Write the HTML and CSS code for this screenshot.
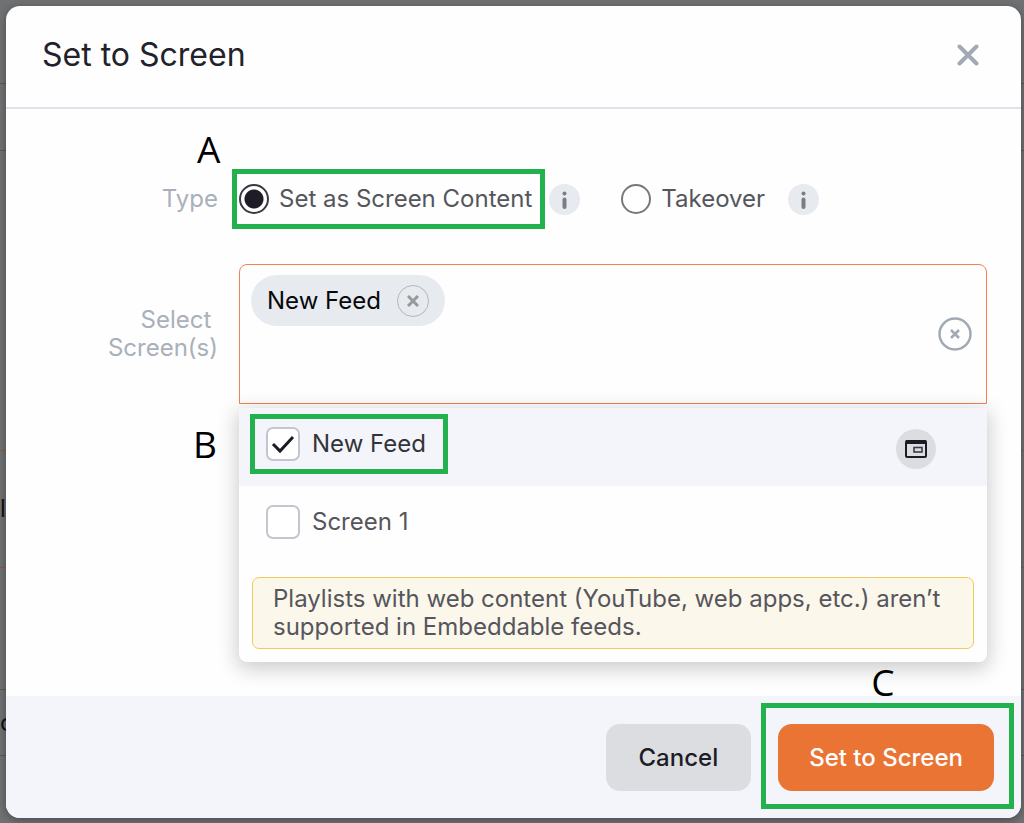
FILE: index.html
```
<!DOCTYPE html>
<html lang="en">
<head>
    <meta charset="UTF-8">
    <meta name="viewport" content="width=device-width, initial-scale=1.0">
    <title>Set to Screen</title>
    <link rel="stylesheet" href="styles.css">
</head>
<body>
    <!-- dimmed list behind the dialog -->
    <div class="backdrop" aria-hidden="true">
        <div class="line line-1"></div>
        <div class="line line-2"></div>
        <div class="line line-3 accent"></div>
        <div class="line line-4 accent">l</div>
        <div class="line line-5"></div>
        <div class="line line-6">o</div>
    </div>

    <div class="modal" role="dialog" aria-labelledby="modal-title">
        <header class="modal-header">
            <h1 id="modal-title">Set to Screen</h1>
            <button class="close" type="button" aria-label="Close">
                <svg width="22" height="22" viewBox="0 0 22 22"><path d="M2.5 2.5L19.5 19.5M19.5 2.5L2.5 19.5"/></svg>
            </button>
        </header>

        <form id="screen-form" class="modal-body">
            <div class="row type-row" role="radiogroup" aria-labelledby="type-label">
                <span id="type-label" class="row-label">Type</span>
                <div class="choices">
                    <div class="choice marked">
                        <input type="radio" id="type-content" name="type" checked>
                        <label for="type-content">Set as Screen Content</label>
                        <span class="mark mark-type"></span>
                        <span class="letter letter-a">A</span>
                    </div>
                    <button class="info" type="button" aria-label="About screen content">
                        <svg width="31" height="31" viewBox="0 0 31 31"><circle cx="15.5" cy="9.5" r="2"/><rect x="13.5" y="13.5" width="4" height="11.5" rx="2"/></svg>
                    </button>
                    <div class="choice takeover">
                        <input type="radio" id="type-takeover" name="type">
                        <label for="type-takeover">Takeover</label>
                    </div>
                    <button class="info" type="button" aria-label="About takeover">
                        <svg width="31" height="31" viewBox="0 0 31 31"><circle cx="15.5" cy="9.5" r="2"/><rect x="13.5" y="13.5" width="4" height="11.5" rx="2"/></svg>
                    </button>
                </div>
            </div>

            <div class="row">
                <span id="screens-label" class="row-label screens-label">Select&nbsp;<br>Screen(s)</span>
                <div class="picker" role="group" aria-labelledby="screens-label">
                    <div class="picker-field">
                        <span class="chip">
                            New Feed
                            <button class="chip-remove" type="button" aria-label="Remove New Feed">
                                <svg width="12" height="12" viewBox="0 0 12 12"><path d="M1 1L11 11M11 1L1 11"/></svg>
                            </button>
                        </span>
                        <button class="clear" type="button" aria-label="Clear all">
                            <svg width="34" height="34" viewBox="0 0 34 34"><circle cx="17" cy="17" r="15.5"/><path d="M13 13L21 21M21 13L13 21"/></svg>
                        </button>
                    </div>

                    <div class="menu">
                        <div class="option selected">
                            <div class="option-main">
                                <input type="checkbox" id="screen-feed" checked>
                                <label for="screen-feed">New Feed</label>
                                <span class="mark mark-option"></span>
                                <span class="letter letter-b">B</span>
                            </div>
                            <span class="badge">
                                <svg width="22" height="18" viewBox="0 0 22 18">
                                    <rect x="1" y="1" width="20" height="16" rx="1" fill="none" stroke="#1c1b25" stroke-width="2"/>
                                    <rect x="1" y="0" width="20" height="4" fill="#1c1b25"/>
                                    <rect x="9" y="7.5" width="8" height="4.5" fill="none" stroke="#3c3b43" stroke-width="1.6"/>
                                </svg>
                            </span>
                        </div>
                        <div class="option">
                            <div class="option-main">
                                <input type="checkbox" id="screen-1">
                                <label for="screen-1">Screen 1</label>
                            </div>
                        </div>
                        <p class="note">Playlists with web content (YouTube, web apps, etc.) aren’t supported in Embeddable feeds.</p>
                    </div>
                </div>
            </div>
        </form>

        <footer class="modal-footer">
            <button class="btn" type="button">Cancel</button>
            <div class="marked">
                <button class="btn btn-primary" type="submit" form="screen-form">Set to Screen</button>
                <span class="mark mark-submit"></span>
                <span class="letter letter-c">C</span>
            </div>
        </footer>
    </div>
</body>
</html>
```
FILE: styles.css
```
* {
    margin: 0;
    padding: 0;
    box-sizing: border-box;
}

body {
    min-height: 100vh;
    padding: 6px 3px 5px 6px;
    display: flex;
    background: #707173;
    font-family: Inter, "Liberation Sans", sans-serif;
    font-size: 24px;
    line-height: 28px;
    color: #55565c;
}

button {
    border: none;
    background: none;
    font: inherit;
    cursor: pointer;
}

svg {
    display: block;
}

/* Page behind */
.backdrop {
    position: absolute;
    inset: 0;
    overflow: hidden;
    color: #111114;
}

.line {
    display: flex;
    align-items: center;
    border-bottom: 1px solid #5a5b5d;
}

.line-1 { height: 84px; }
.line-2 { height: 67px; }
.line-3 { height: 300px; }
.line-4 { height: 117px; }
.line-5 { height: 122px; }
.line-6 { height: 66px; }

.line.accent {
    border-color: #8d5a40;
}

/* Dialog */
.modal {
    position: relative;
    flex: 1;
    display: flex;
    flex-direction: column;
    background: #fefefe;
    border-radius: 14px;
    box-shadow: 0 2px 8px rgba(0, 0, 0, 0.35);
}

.modal-header {
    display: flex;
    align-items: center;
    justify-content: space-between;
    height: 103px;
    padding: 0 42px 4px 36px;
    border-bottom: 2px solid #e0e2e9;
}

h1 {
    font-size: 32px;
    font-weight: 400;
    line-height: 40px;
    color: #22222b;
}

.close path {
    fill: none;
    stroke: #a1aab4;
    stroke-width: 4;
    stroke-linecap: round;
}

.modal-body {
    flex: 1;
    padding: 60px 34px 34px 90px;
}

.row {
    display: flex;
    gap: 21px;
}

.row-label {
    width: 122px;
    text-align: right;
    color: #a9b0bb;
}

.type-row {
    align-items: center;
    height: 60px;
    margin-bottom: 35px;
}

.screens-label {
    padding-top: 42px;
}

.choices,
.choice {
    display: flex;
    align-items: center;
}

.choice {
    gap: 10px;
}

.marked,
.option-main {
    position: relative;
}

.choice.marked {
    margin-right: 17px;
}

.takeover {
    margin: 0 23px 0 41px;
}

input[type="radio"] {
    appearance: none;
    width: 30px;
    height: 30px;
    border: 2px solid #77787c;
    border-radius: 50%;
    background: #fff;
}

input[type="radio"]:checked {
    border-color: #3a3942;
    background: radial-gradient(circle, #1e1d27 9px, #fff 10px);
}

.info {
    flex: none;
    width: 31px;
    height: 31px;
    border-radius: 50%;
    background: #e7eaef;
}

.info svg {
    fill: #7a7c86;
}

/* Screen picker */
.picker {
    flex: 1;
}

.picker-field {
    display: flex;
    justify-content: space-between;
    align-items: flex-start;
    height: 140px;
    padding: 10px 14px 0 11px;
    border: 1px solid #ee8450;
    border-radius: 8px 8px 0 0;
}

.chip {
    display: flex;
    align-items: center;
    gap: 16px;
    height: 51px;
    padding: 0 16px;
    border-radius: 26px;
    background: #e7eaef;
    color: #08080a;
}

.chip-remove {
    display: grid;
    place-items: center;
    width: 32px;
    height: 32px;
    border: 1px solid #b4b8bd;
    border-radius: 50%;
}

.chip-remove path {
    stroke: #999;
    stroke-width: 3;
}

.clear {
    margin-top: 42px;
}

.clear svg {
    fill: none;
    stroke: #a1aab4;
    stroke-width: 2.5;
}

.menu {
    margin-top: 4px;
    padding-bottom: 13px;
    border-radius: 0 0 8px 8px;
    background: #fefefe;
    box-shadow: 0 5px 20px 2px rgba(0, 0, 0, 0.2);
}

.option {
    display: flex;
    justify-content: space-between;
    align-items: flex-start;
    height: 78px;
    padding: 19px 51px 15px 27px;
}

.option.selected {
    background: #f4f5fa;
    color: #33343a;
}

.option-main {
    display: flex;
    align-items: center;
    gap: 12px;
}

input[type="checkbox"] {
    appearance: none;
    width: 34px;
    height: 34px;
    border: 2px solid #c3c6cf;
    border-radius: 7px;
    background: #fff;
}

input[type="checkbox"]:checked {
    background: #fff url("data:image/svg+xml,%3Csvg xmlns='http://www.w3.org/2000/svg' viewBox='0 0 30 30'%3E%3Cpath d='M5 15L12 22L25 8' fill='none' stroke='%231c1b25' stroke-width='3'/%3E%3C/svg%3E");
}

.badge {
    align-self: center;
    display: grid;
    place-items: center;
    width: 40px;
    height: 40px;
    border-radius: 50%;
    background: #dcdde1;
}

.note {
    margin: 13px 13px 0;
    padding: 7px 20px;
    border: 1px solid #f3cb5d;
    border-radius: 7px;
    background: #fcf7eb;
}

.modal-footer {
    display: flex;
    justify-content: flex-end;
    gap: 27px;
    padding: 28px 27px 27px;
    border-radius: 0 0 14px 14px;
    background: #f4f5fa;
}

.btn {
    height: 67px;
    padding: 0 33px;
    border-radius: 14px;
    background: #dcdde1;
    font-weight: 500;
    color: #1c1d26;
}

.btn-primary {
    padding: 0 31px;
    background: #ea7434;
    color: #fff;
}

/* Step markers over the dialog */
.mark {
    position: absolute;
    border: 5px solid #23b14d;
    pointer-events: none;
}

.mark-type { inset: -15px -13px -15px -7px; }
.mark-option { inset: -13px -22px -13px -16px; }
.mark-submit { inset: -21px -20px -18px -17px; }

.letter {
    position: absolute;
    font-family: "Open Sans", "Noto Sans", sans-serif;
    font-size: 37px;
    line-height: 40px;
    color: #000;
}

.letter-a { left: -42px; top: -55px; }
.letter-b { left: -73px; top: -3px; }
.letter-c { left: 93px; top: -62px; }
```
